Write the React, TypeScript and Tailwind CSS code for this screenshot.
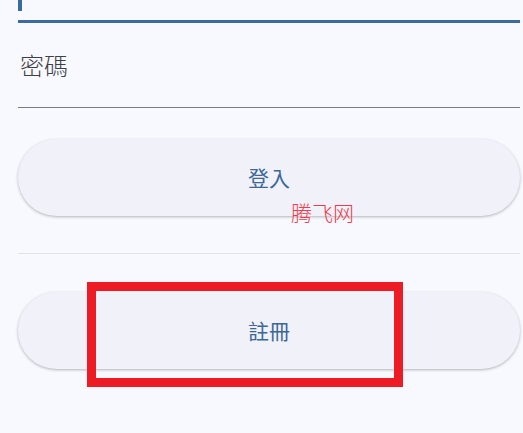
import React from 'react';

const cjk = { fontFamily: '"Noto Sans CJK TC", "Noto Sans", sans-serif' };

export default function App() {
  return (
    <div className="relative h-[433px] w-[523px] overflow-hidden bg-[#f8f9fe]" style={cjk}>
      <div className="flex flex-col pl-[18px] pr-[3px]">
        {/* Focused account field (only its bottom is visible) */}
        <div className="h-[11px] w-[4px] bg-[#3b6a9e]" />
        <div className="mt-[9px] h-[3px] bg-[#3b6a9e]" />

        {/* Password field */}
        <div className="flex h-[85px] items-center border-b border-[#7b7b82] pl-[2px]">
          <span className="text-[24px] font-light leading-none text-[#3f4046]">密碼</span>
        </div>

        {/* Login button */}
        <button className="mt-[31px] h-[77px] rounded-full bg-[#f1f2f9] text-[21px] text-[#3c6797] shadow-[0_1px_3px_rgba(0,0,0,0.28)]">
          登入
        </button>

        <div className="mt-[37px] h-px bg-[#e2e2e8]" />

        {/* Register button */}
        <button className="mt-[38px] h-[77px] rounded-full bg-[#f1f2f9] text-[21px] text-[#3c6797] shadow-[0_1px_3px_rgba(0,0,0,0.28)]">
          註冊
        </button>
      </div>

      {/* Watermark */}
      <span className="absolute left-[291px] top-[198px] text-[21px] font-light leading-[28px] text-[#f03a4e]">
        腾飞网
      </span>

      {/* Annotation box */}
      <div className="absolute left-[87px] top-[282px] h-[105px] w-[316px] border-[9px] border-[#ed1c24]" />
    </div>
  );
}
